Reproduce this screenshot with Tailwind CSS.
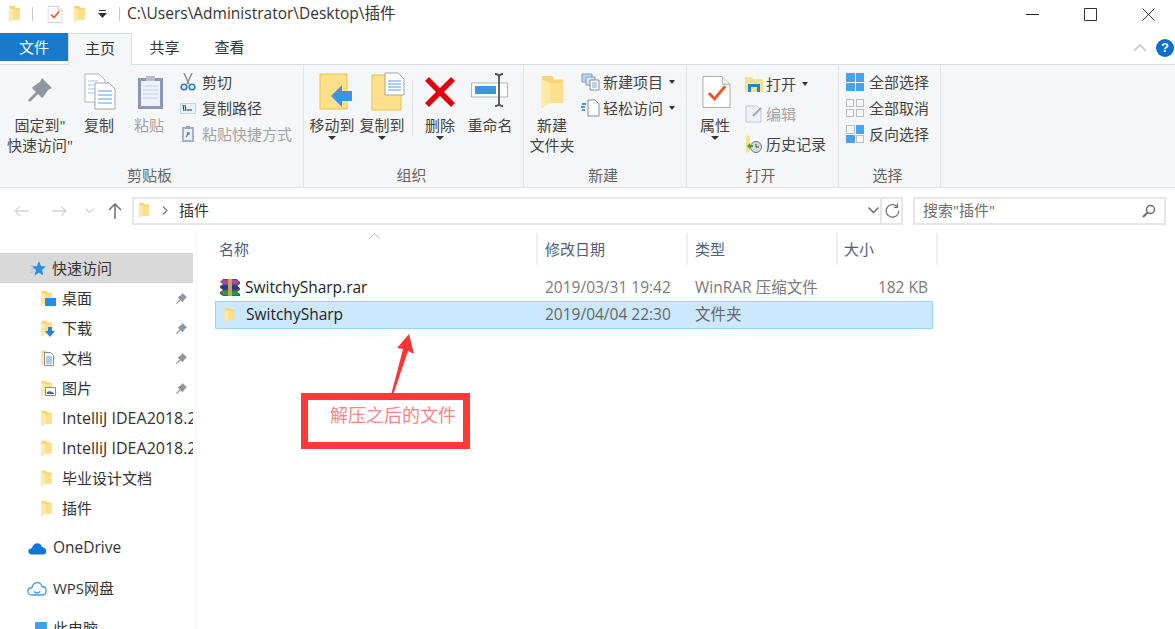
<!DOCTYPE html>
<html lang="zh-CN">
<head>
    <meta charset="UTF-8">
    <title>插件</title>
    <script src="https://cdn.jsdelivr.net/npm/@tailwindcss/browser@4"></script>
</head>
<body class="bg-white w-[1175px] h-[629px] overflow-hidden relative text-[15px] text-[#3a3a3a] font-['Open_Sans','Noto_Sans_CJK_SC',sans-serif]">

    <svg class="hidden">
        <symbol id="folder" viewBox="0 0 14 20">
            <path d="M1 1h6l1 2h5v13H5l-4 3z" fill="#f6d672"/>
            <path d="M1 3l5 2v11l-5 3z" fill="#ffe9a6"/>
            <path d="M6 5h7v11H6z" fill="#fbdf8a"/>
        </symbol>
        <symbol id="pin" viewBox="0 0 14 14">
            <path d="M8 1l5 5-2 1-2 3-1 1-2-2-4 4-1-1 4-4-2-2 1-1 3-2z" fill="#8f979e"/>
        </symbol>
        <symbol id="doc" viewBox="0 0 30 34">
            <path d="M1 1h20l8 8v24H1z" fill="#fff" stroke="#a9a9a9"/>
            <path d="M21 1v8h8" fill="#eee" stroke="#a9a9a9"/>
        </symbol>
    </svg>

    <!-- Title bar -->
    <div class="h-[33px] flex items-center pl-2 pb-[5px]">
        <svg class="w-[13px] h-[18px]"><use href="#folder"/></svg>
        <div class="w-px h-[14px] bg-[#c8c8c8] ml-[11px]"></div>
        <svg class="w-4 h-[17px] ml-[14px]" viewBox="0 0 30 34">
            <use href="#doc"/>
            <path d="M7 17l6 6 10-12" fill="none" stroke="#e8592b" stroke-width="3.5"/>
        </svg>
        <svg class="w-[13px] h-[18px] ml-[10px]"><use href="#folder"/></svg>
        <svg class="w-[9px] h-[8px] ml-[12px]" viewBox="0 0 9 8"><path d="M1 0h7v1H1z" fill="#333"/><path d="M0 3h9L4.500 8z" fill="#333"/></svg>
        <div class="w-px h-[14px] bg-[#c8c8c8] ml-[12px]"></div>
        <span class="ml-[7px] text-[15.5px] text-[#333]">C:\Users\Administrator\Desktop\插件</span>
        <div class="ml-auto flex items-center pr-5 gap-[45px]">
            <svg class="w-[13px] h-[13px]" viewBox="0 0 13 13"><path d="M0 6.500h13" stroke="#222"/></svg>
            <svg class="w-[13px] h-[13px]" viewBox="0 0 13 13"><path d="M.5.500h12v12H.5z" fill="none" stroke="#333"/></svg>
            <svg class="w-[13px] h-[13px]" viewBox="0 0 13 13"><path d="M.5.500l12 12M12.500.500l-12 12" stroke="#333"/></svg>
        </div>
    </div>

    <!-- Tabs -->
    <div class="h-[32px] flex border-b border-[#dadbdc] relative">
        <div class="w-[68px] h-[28px] bg-[#1979ca] text-white flex items-center justify-center">文件</div>
        <div class="w-[64px] h-[32px] pb-[2px] bg-[#f5f6f7] border border-b-0 border-[#dadbdc] flex items-center justify-center text-[#333]">主页</div>
        <div class="w-[65px] flex items-center justify-center text-[#333] pb-[2px]">共享</div>
        <div class="w-[65px] flex items-center justify-center text-[#333] pb-[2px]">查看</div>
        <div class="ml-auto flex items-center gap-[9px] pr-[1px] pb-[2px]">
            <svg class="w-[14px] h-2" viewBox="0 0 14 8"><path d="M1 7l6-6 6 6" fill="none" stroke="#bdbdbd" stroke-width="1.300"/></svg>
            <div class="w-[18px] h-[18px] rounded-full bg-[#0c6fd0] text-white text-[13px] font-bold flex items-center justify-center font-['Liberation_Sans']">?</div>
        </div>
    </div>

    <!-- Ribbon -->
    <div class="h-[123px] bg-[#f5f6f7] border-b border-[#e1e1e1] flex text-[#444]">

        <!-- 剪贴板 -->
        <div class="w-[304px] flex flex-col border-r border-[#e4e5e6] pt-[3px]">
            <div class="h-[97px] flex pl-2">
                <div class="w-[64px] flex flex-col items-center">
                    <div class="h-[47px] flex items-center justify-center pb-1">
                        <svg class="w-[28px] h-[28px]" viewBox="0 0 14 14"><use href="#pin"/></svg>
                    </div>
                    <div class="leading-5 text-center whitespace-nowrap">固定到"<br>快速访问"</div>
                </div>
                <div class="w-[54px] flex flex-col items-center">
                    <div class="h-[47px] flex items-center justify-center pl-[2px]">
                        <svg class="w-[32px] h-[37px]" viewBox="0 0 32 37">
                            <path d="M1 1h14l6 6v22H1z" fill="#fff" stroke="#b5b5b5"/>
                            <path d="M4 8h10M4 12h14M4 16h14M4 20h14" stroke="#9fc2ea"/>
                            <path d="M11 10h14l6 6v20H11z" fill="#fff" stroke="#a5a5a5"/>
                            <path d="M14 18h14M14 22h14M14 26h14M14 30h14" stroke="#5d9be0"/>
                        </svg>
                    </div>
                    <div class="leading-5">复制</div>
                </div>
                <div class="w-[46px] flex flex-col items-center text-[#a3a3a3]">
                    <div class="h-[47px] flex items-center justify-center pl-[2px]">
                        <svg class="w-[27px] h-[37px]" viewBox="0 0 27 37">
                            <path d="M1 5h25v31H1z" fill="#8f97b8"/>
                            <path d="M4 8h19v25H4z" fill="#eef1f8"/>
                            <path d="M6 13h15M6 17h15M6 21h15M6 25h15" stroke="#c7d0e2"/>
                            <path d="M9 3h9v5H9z" fill="#b8bccb"/>
                        </svg>
                    </div>
                    <div class="leading-5">粘贴</div>
                </div>
                <div class="flex flex-col pl-[8px] pt-[1px] whitespace-nowrap">
                    <div class="h-[26px] flex items-center gap-[6px]">
                        <svg class="w-[16px] h-[18px]" viewBox="0 0 16 18">
                            <path d="M4 0l5 11M12 0L7 11" stroke="#8a8f96" stroke-width="1.500"/>
                            <circle cx="4" cy="14" r="2.800" fill="none" stroke="#2f78c8" stroke-width="1.600"/>
                            <circle cx="12" cy="14" r="2.800" fill="none" stroke="#2f78c8" stroke-width="1.600"/>
                        </svg>
                        <span>剪切</span>
                    </div>
                    <div class="h-[26px] flex items-center gap-[6px]">
                        <svg class="w-[16px] h-[11px]" viewBox="0 0 16 11">
                            <path d="M0 0h16v11H0z" fill="#b7d8f4"/>
                            <path d="M1 1h14v9H1z" fill="#e6f2fb"/>
                            <path d="M3 2l1 6M5 2l1 6M7 7h5" stroke="#333"/>
                        </svg>
                        <span>复制路径</span>
                    </div>
                    <div class="h-[26px] flex items-center gap-[6px] text-[#a3a3a3]">
                        <svg class="w-[16px] h-[18px]" viewBox="0 0 14 18">
                            <path d="M1 2h12v15H1z" fill="#a9afc9"/>
                            <path d="M3 4h8v11H3z" fill="#eef1f8"/>
                            <path d="M5 1h4v3H5z" fill="#9aa0b5"/>
                            <path d="M5 12l3-4M6 8h2v2" fill="none" stroke="#5f88b8" stroke-width="1.300"/>
                        </svg>
                        <span>粘贴快捷方式</span>
                    </div>
                </div>
            </div>
            <div class="h-5 leading-5 text-center text-[#666] pr-1">剪贴板</div>
        </div>

        <!-- 组织 -->
        <div class="w-[220px] flex flex-col border-r border-[#e4e5e6] pt-[3px]">
            <div class="h-[97px] flex pl-[3px]">
                <div class="w-[50px] flex flex-col items-center">
                    <div class="h-[47px] flex items-center justify-center pl-[7px]">
                        <svg class="w-[34px] h-[37px]" viewBox="0 0 34 37">
                            <path d="M1 1h27v35H1z" fill="#fde08a" stroke="#e8c25c"/>
                            <path d="M12 23l11-11v6h10v10H23v6z" fill="#3d94e0"/>
                        </svg>
                    </div>
                    <div class="leading-5 whitespace-nowrap">移动到</div>
                    <div class="w-0 h-0 mt-[1px] border-x-[4px] border-x-transparent border-t-[4px] border-t-[#333]"></div>
                </div>
                <div class="w-[50px] flex flex-col items-center">
                    <div class="h-[47px] flex items-center justify-center pl-[11px]">
                        <svg class="w-[34px] h-[39px]" viewBox="0 0 34 39">
                            <path d="M1 3h29v35H1z" fill="#fde08a" stroke="#e8c25c"/>
                            <path d="M14 1h13l6 6v16H14z" fill="#fff" stroke="#a5a5a5"/>
                            <path d="M17 9h13M17 12h13M17 15h13M17 18h13" stroke="#5d9be0"/>
                        </svg>
                    </div>
                    <div class="leading-5 whitespace-nowrap">复制到</div>
                    <div class="w-0 h-0 mt-[1px] border-x-[4px] border-x-transparent border-t-[4px] border-t-[#333]"></div>
                </div>
                <div class="w-px h-[56px] bg-[#e2e3e4] ml-[5px] mt-[12px]"></div>
                <div class="w-[50px] ml-[2px] flex flex-col items-center">
                    <div class="h-[47px] flex items-center justify-center">
                        <svg class="w-[32px] h-[32px]" viewBox="0 0 32 32"><path d="M3 3l26 26M29 3L3 29" stroke="#e0000f" stroke-width="5.500"/></svg>
                    </div>
                    <div class="leading-5">删除</div>
                    <div class="w-0 h-0 mt-[1px] border-x-[4px] border-x-transparent border-t-[4px] border-t-[#333]"></div>
                </div>
                <div class="w-[50px] flex flex-col items-center">
                    <div class="h-[47px] flex items-center justify-center pb-1">
                        <svg class="w-[38px] h-[34px]" viewBox="0 0 38 34">
                            <path d="M.5 10h36v14H.5z" fill="#fff" stroke="#b5b5b5"/>
                            <path d="M4 13h21v8H4z" fill="#3d94e0"/>
                            <path d="M24 1c3 0 4 1 4 3v26c0 2-1 3-4 3M32 1c-3 0-4 1-4 3v26c0 2 1 3 4 3" fill="none" stroke="#555" stroke-width="1.800"/>
                        </svg>
                    </div>
                    <div class="leading-5 whitespace-nowrap">重命名</div>
                </div>
            </div>
            <div class="h-5 leading-5 text-center text-[#666] pr-1">组织</div>
        </div>

        <!-- 新建 -->
        <div class="w-[163px] flex flex-col border-r border-[#e4e5e6] pt-[3px]">
            <div class="h-[97px] flex pl-[3px]">
                <div class="w-[50px] flex flex-col items-center">
                    <div class="h-[47px] flex items-center justify-center">
                        <svg class="w-[25px] h-[36px]"><use href="#folder"/></svg>
                    </div>
                    <div class="leading-5 text-center whitespace-nowrap">新建<br>文件夹</div>
                </div>
                <div class="flex flex-col pl-[4px] pt-[1px] whitespace-nowrap">
                    <div class="h-[26px] flex items-center gap-[3px]">
                        <svg class="w-[19px] h-[18px]" viewBox="0 0 19 18">
                            <path d="M1 1h10v8H1z" fill="#b9d6f2" stroke="#7f9cb8"/>
                            <path d="M5 4h9v8H5z" fill="#d5e6f6" stroke="#7f9cb8"/>
                            <path d="M9 7h9v10H9z" fill="#fff" stroke="#8a8a8a"/>
                            <path d="M11 10h5M11 12h5M11 14h5" stroke="#7fa6d0"/>
                        </svg>
                        <span>新建项目</span>
                        <div class="w-0 h-0 ml-[3px] border-x-[3.500px] border-x-transparent border-t-[4px] border-t-[#333]"></div>
                    </div>
                    <div class="h-[26px] flex items-center gap-[3px]">
                        <svg class="w-[19px] h-[18px]" viewBox="0 0 19 18">
                            <path d="M7 1h7l4 4v12H7z" fill="#fff" stroke="#8a8a8a"/>
                            <path d="M1 5h4M0 8h4M1 11h3" stroke="#2470c2" stroke-width="1.300"/>
                        </svg>
                        <span>轻松访问</span>
                        <div class="w-0 h-0 ml-[3px] border-x-[3.500px] border-x-transparent border-t-[4px] border-t-[#333]"></div>
                    </div>
                </div>
            </div>
            <div class="h-5 leading-5 text-center text-[#666] pr-1">新建</div>
        </div>

        <!-- 打开 -->
        <div class="w-[152px] flex flex-col border-r border-[#e4e5e6] pt-[3px]">
            <div class="h-[97px] flex pl-[3px]">
                <div class="w-[50px] flex flex-col items-center">
                    <div class="h-[47px] flex items-center justify-center pl-[2px]">
                        <svg class="w-[29px] h-[36px]" viewBox="0 0 30 34">
                            <use href="#doc"/>
                            <path d="M7 18l6 6 11-13" fill="none" stroke="#e8592b" stroke-width="3"/>
                        </svg>
                    </div>
                    <div class="leading-5">属性</div>
                    <div class="w-0 h-0 mt-[1px] border-x-[4px] border-x-transparent border-t-[4px] border-t-[#333]"></div>
                </div>
                <div class="flex flex-col pl-[5px] pt-[1px] whitespace-nowrap">
                    <div class="h-[30px] flex items-center gap-[3px]">
                        <svg class="w-[18px] h-[16px]" viewBox="0 0 18 16">
                            <path d="M0 1h7l1 2h10v13H0z" fill="#fde08a"/>
                            <path d="M3 8h12v8h-3v-5H6v5H3z" fill="#1d86d8"/>
                        </svg>
                        <span>打开</span>
                        <div class="w-0 h-0 ml-[3px] border-x-[3.500px] border-x-transparent border-t-[4px] border-t-[#333]"></div>
                    </div>
                    <div class="h-[30px] flex items-center gap-[3px] text-[#a3a3a3]">
                        <svg class="w-[18px] h-[18px]" viewBox="0 0 18 18">
                            <path d="M1 1h11l4 4v12H1z" fill="#eef1f8" stroke="#bcc6d8"/>
                            <path d="M8 11l8-8" stroke="#9aa8c0" stroke-width="2"/>
                        </svg>
                        <span>编辑</span>
                    </div>
                    <div class="h-[30px] flex items-center gap-[3px]">
                        <svg class="w-[18px] h-[18px]" viewBox="0 0 18 18">
                            <path d="M1 0l4 2v14l-4 2z" fill="#fde08a"/>
                            <circle cx="11" cy="12" r="5.500" fill="#d9d9d9" stroke="#777"/>
                            <path d="M11 9v3h3" fill="none" stroke="#444"/>
                            <path d="M2 11l3-3v2h3v2H5v2z" fill="#3aa53a"/>
                        </svg>
                        <span>历史记录</span>
                    </div>
                </div>
            </div>
            <div class="h-5 leading-5 text-center text-[#666] pr-1">打开</div>
        </div>

        <!-- 选择 -->
        <div class="w-[102px] flex flex-col border-r border-[#e4e5e6] pt-[3px]">
            <div class="h-[97px] flex flex-col pl-[7px] pt-[1px] whitespace-nowrap">
                <div class="h-[26px] flex items-center gap-[5px]">
                    <div class="w-[18px] h-[18px] grid grid-cols-2 gap-[1px]">
                        <div class="bg-[#4aa3ea]"></div><div class="bg-[#4aa3ea]"></div><div class="bg-[#4aa3ea]"></div><div class="bg-[#4aa3ea]"></div>
                    </div>
                    <span>全部选择</span>
                </div>
                <div class="h-[26px] flex items-center gap-[5px]">
                    <div class="w-[18px] h-[18px] grid grid-cols-2 gap-[2px]">
                        <div class="border border-[#bdbdbd]"></div><div class="border border-[#bdbdbd]"></div><div class="border border-[#bdbdbd]"></div><div class="border border-[#bdbdbd]"></div>
                    </div>
                    <span>全部取消</span>
                </div>
                <div class="h-[26px] flex items-center gap-[5px]">
                    <div class="w-[18px] h-[18px] grid grid-cols-2 gap-[1px]">
                        <div class="border border-[#bdbdbd]"></div><div class="bg-[#4aa3ea]"></div><div class="bg-[#4aa3ea]"></div><div class="border border-[#bdbdbd]"></div>
                    </div>
                    <span>反向选择</span>
                </div>
            </div>
            <div class="h-5 leading-5 text-center text-[#666] pr-1">选择</div>
        </div>
    </div>

    <!-- Address row -->
    <div class="h-[43px] pt-[2px] flex items-center relative">
        <div class="flex items-center w-[132px] pl-[14px]">
            <svg class="w-[15px] h-[12px]" viewBox="0 0 15 12"><path d="M15 6H1M6 1L1 6l5 5" fill="none" stroke="#d4d4d4" stroke-width="1.300"/></svg>
            <svg class="w-[15px] h-[12px] ml-[23px]" viewBox="0 0 15 12"><path d="M0 6h14M9 1l5 5-5 5" fill="none" stroke="#d4d4d4" stroke-width="1.300"/></svg>
            <svg class="w-[9px] h-[6px] ml-[18px]" viewBox="0 0 9 6"><path d="M.5.500l4 4 4-4" fill="none" stroke="#d4d4d4" stroke-width="1.200"/></svg>
            <svg class="w-[14px] h-[16px] ml-[14px]" viewBox="0 0 14 16"><path d="M7 16V1M1 7l6-6 6 6" fill="none" stroke="#6e6e6e" stroke-width="1.500"/></svg>
        </div>
        <div class="w-[771px] h-[28px] border-2 border-[#e6e6e6] flex items-center">
            <div class="w-[748px] flex items-center h-full border-r-2 border-[#e6e6e6]">
                <svg class="w-[12px] h-[17px] ml-[4px]"><use href="#folder"/></svg>
                <svg class="w-[6px] h-[9px] ml-[12px]" viewBox="0 0 6 9"><path d="M1 .500l4 4-4 4" fill="none" stroke="#777" stroke-width="1.200"/></svg>
                <span class="ml-[11px] text-[#333]">插件</span>
                <svg class="w-[11px] h-[7px] ml-auto mr-[1px]" viewBox="0 0 11 7"><path d="M.5.500l5 5 5-5" fill="none" stroke="#666" stroke-width="1.400"/></svg>
            </div>
            <svg class="w-[15px] h-[15px] ml-[3px]" viewBox="0 0 15 15"><path d="M12 3.500A6.300 6.300 0 1 0 13.800 8M12.500.500v3.800H8.800" fill="none" stroke="#777" stroke-width="1.300"/></svg>
        </div>
        <div class="w-[253px] h-[28px] ml-[10px] border-2 border-[#e6e6e6] flex items-center pl-2 pr-2 text-[#6d6d6d]">
            <span>搜索"插件"</span>
            <svg class="w-[14px] h-[14px] ml-auto" viewBox="0 0 14 14"><circle cx="8.500" cy="5.500" r="4" fill="none" stroke="#666" stroke-width="1.400"/><path d="M5.500 8.500L1 13" stroke="#666" stroke-width="1.800"/></svg>
        </div>
    </div>

    <!-- Main -->
    <div class="flex h-[400px]">

        <!-- Sidebar -->
        <div class="w-[196px] shrink-0 border-r border-[#f4f4f4] overflow-hidden pt-[22px]">
            <div class="w-[193px] overflow-hidden whitespace-nowrap text-[#333]">
                <div class="h-[30px] bg-[#d9d9d9] flex items-center pl-[30px] gap-[6px]">
                    <svg class="w-[16px] h-[15px]" viewBox="0 0 16 15"><path d="M9 0l2 5 5 .500-4 3.500 1.300 5.500L9 11.700 4.500 14.500 6 9 2 5.500 7 5z" fill="#2b8fe6"/><path d="M0 5h4M1 8h3M0 11h4" stroke="#8cc4f2"/></svg>
                    <span>快速访问</span>
                </div>
                <div class="h-[30px] flex items-center pl-[40px] pr-[5px]">
                    <div class="w-[13px] h-[17px] relative"><svg class="w-[13px] h-[17px]"><use href="#folder"/></svg><div class="absolute left-[5px] top-[8px] w-[11px] h-[8px] bg-[#1e90e0]"></div></div>
                    <span class="ml-[9px]">桌面</span>
                    <svg class="w-[13px] h-[13px] ml-auto"><use href="#pin"/></svg>
                </div>
                <div class="h-[30px] flex items-center pl-[40px] pr-[5px]">
                    <div class="w-[13px] h-[17px] relative"><svg class="w-[13px] h-[17px]"><use href="#folder"/></svg><svg class="absolute left-[5px] top-[7px] w-[10px] h-[10px]" viewBox="0 0 10 10"><path d="M3 0h4v4h3l-5 6-5-6h3z" fill="#2b7fd4"/></svg></div>
                    <span class="ml-[9px]">下载</span>
                    <svg class="w-[13px] h-[13px] ml-auto"><use href="#pin"/></svg>
                </div>
                <div class="h-[30px] flex items-center pl-[40px] pr-[5px]">
                    <div class="w-[13px] h-[17px] relative">
                        <svg class="w-[13px] h-[17px]"><use href="#folder"/></svg>
                        <svg class="absolute left-[4px] top-[2px] w-[10px] h-[14px]" viewBox="0 0 10 14"><path d="M.5.500h6l3 3v10h-9z" fill="#fff" stroke="#8a8a8a"/><path d="M2 5h6M2 7h6M2 9h6M2 11h6" stroke="#5d9be0"/></svg>
                    </div>
                    <span class="ml-[9px]">文档</span>
                    <svg class="w-[13px] h-[13px] ml-auto"><use href="#pin"/></svg>
                </div>
                <div class="h-[30px] flex items-center pl-[40px] pr-[5px]">
                    <div class="w-[13px] h-[17px] relative">
                        <svg class="w-[13px] h-[17px]"><use href="#folder"/></svg>
                        <svg class="absolute left-[5px] top-[7px] w-[11px] h-[9px]" viewBox="0 0 11 9"><path d="M.5.500h10v8H.5z" fill="#fff" stroke="#8a8a8a"/><path d="M2 5l3-1 4 2v1H2z" fill="#4a6a8a"/></svg>
                    </div>
                    <span class="ml-[9px]">图片</span>
                    <svg class="w-[13px] h-[13px] ml-auto"><use href="#pin"/></svg>
                </div>
                <div class="h-[30px] flex items-center pl-[40px]">
                    <svg class="w-[13px] h-[17px] shrink-0"><use href="#folder"/></svg>
                    <span class="ml-[9px] text-[16px]">IntelliJ IDEA2018.2</span>
                </div>
                <div class="h-[30px] flex items-center pl-[40px]">
                    <svg class="w-[13px] h-[17px] shrink-0"><use href="#folder"/></svg>
                    <span class="ml-[9px] text-[16px]">IntelliJ IDEA2018.2</span>
                </div>
                <div class="h-[30px] flex items-center pl-[40px]">
                    <svg class="w-[13px] h-[17px]"><use href="#folder"/></svg>
                    <span class="ml-[9px]">毕业设计文档</span>
                </div>
                <div class="h-[30px] flex items-center pl-[40px]">
                    <svg class="w-[13px] h-[17px]"><use href="#folder"/></svg>
                    <span class="ml-[9px]">插件</span>
                </div>
                <div class="h-[30px] mt-[10px] flex items-center pl-[28px] gap-[6px]">
                    <svg class="w-[19px] h-[13px]" viewBox="0 0 19 13"><path d="M4 12.500c-5 0-5-6 0-6.500C5 1 12-1 14 5c5 0 6 7.500 1 7.500z" fill="#0f78d4"/></svg>
                    <span class="text-[15.5px]">OneDrive</span>
                </div>
                <div class="h-[30px] mt-[10px] flex items-center pl-[27px] gap-[6px]">
                    <svg class="w-[20px] h-[15px]" viewBox="0 0 20 15"><path d="M5 14c-5.500 0-5.500-7 0-7.500C6 1 13-.5 15 5.500c5.500 0 5.500 8.500 0 8.500z" fill="none" stroke="#3f9ce8" stroke-width="1.300"/><path d="M7 10.500c2 2 4 2 6 0" fill="none" stroke="#3f9ce8" stroke-width="1.300"/></svg>
                    <span>WPS网盘</span>
                </div>
                <div class="h-[30px] mt-[10px] flex items-center pl-[35px] gap-[6px]">
                    <div class="w-[12px] h-[12px] bg-[#3fa2e8]"></div>
                    <span>此电脑</span>
                </div>
            </div>
        </div>

        <!-- File list -->
        <div class="flex-1 pl-[19px] relative">
            <div class="flex h-[35px] text-[#4c607a]">
                <div class="w-[323px] border-r-2 border-[#f0f0f0] pl-[4px] pt-[8px] h-[32px] mt-[2px] flex items-center"><span class="-mt-2">名称</span></div>
                <div class="w-[150px] border-r-2 border-[#f0f0f0] pl-[7px] pt-[8px] h-[32px] mt-[2px] flex items-center"><span class="-mt-2">修改日期</span></div>
                <div class="w-[150px] border-r-2 border-[#f0f0f0] pl-[7px] pt-[8px] h-[32px] mt-[2px] flex items-center"><span class="-mt-2">类型</span></div>
                <div class="w-[100px] border-r-2 border-[#f0f0f0] pl-[6px] pt-[8px] h-[32px] mt-[2px] flex items-center"><span class="-mt-2">大小</span></div>
            </div>
            <div class="mt-[8px] w-[718px] h-[27px] flex items-center text-[#7a7a7a] text-[15.5px]">
                <div class="w-[323px] flex items-center pl-[5px] gap-[5px] text-[#222]">
                    <svg class="w-[20px] h-[17px]" viewBox="0 0 20 17">
                        <path d="M3 0h14l3 3v2L17 7l3 2v2l-3 2 3 2v2H3l-3-2v-2l3-2-3-2V7l3-2-3-2z" fill="#55555c"/>
                        <path d="M3 1h14l2 2-2 2H3L1 3z" fill="#b0459f"/>
                        <path d="M3 6.500h14l2 2-2 2H3l-2-2z" fill="#23389c"/>
                        <path d="M3 12h14l2 2-2 2H3l-2-2z" fill="#2a9a3c"/>
                        <path d="M8 0h4v17H8z" fill="#c9a05c"/>
                    </svg>
                    <span>SwitchySharp.rar</span>
                </div>
                <div class="w-[150px] pl-[7px]">2019/03/31 19:42</div>
                <div class="w-[150px] pl-[7px]">WinRAR 压缩文件</div>
                <div class="w-[90px] text-right">182 KB</div>
            </div>
            <div class="w-[718px] h-[28px] bg-[#cce8ff] border border-[#99d1ff] flex items-center text-[#666] text-[15.5px]">
                <div class="w-[322px] flex items-center pl-[7px] gap-[10px] text-[#222]">
                    <svg class="w-[13px] h-[16px]"><use href="#folder"/></svg>
                    <span>SwitchySharp</span>
                </div>
                <div class="w-[150px] pl-[7px]">2019/04/04 22:30</div>
                <div class="w-[150px] pl-[7px]">文件夹</div>
            </div>
        </div>
    </div>

    <!-- Sort caret over the header -->
    <svg class="absolute left-[369px] top-[233px] w-[11px] h-[6px]" viewBox="0 0 11 6"><path d="M.5 5.500l5-5 5 5" fill="none" stroke="#bdbdbd"/></svg>

    <!-- Annotation -->
    <svg class="absolute left-[385px] top-[330px] w-[35px] h-[66px]" viewBox="0 0 35 66"><path d="M24 4L12 18l6 1-12 46h2l15-44 6 3z" fill="#ff3535"/></svg>
    <div class="absolute left-[301px] top-[393px] w-[169px] h-[56px] border-[7px] border-[#ff3838] bg-white pl-[22px] pt-[2px] text-[18px] leading-[26px] text-[#ff8383] whitespace-nowrap">解压之后的文件</div>
</body>
</html>
